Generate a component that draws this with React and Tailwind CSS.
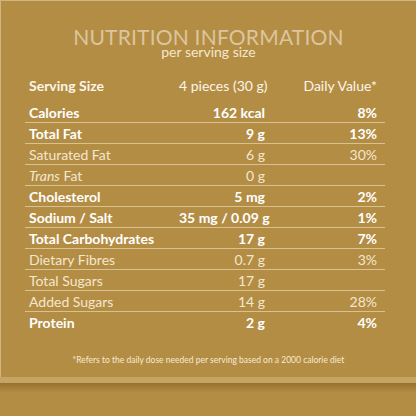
const rows = [
  { label: 'Calories', amount: '162 kcal', dv: '8%', bold: true },
  { label: 'Total Fat', amount: '9 g', dv: '13%', bold: true },
  { label: 'Saturated Fat', amount: '6 g', dv: '30%' },
  { label: 'Trans Fat', amount: '0 g', dv: '', italic: true },
  { label: 'Cholesterol', amount: '5 mg', dv: '2%', bold: true },
  { label: 'Sodium / Salt', amount: '35 mg / 0.09 g', dv: '1%', bold: true },
  { label: 'Total Carbohydrates', amount: '17 g', dv: '7%', bold: true },
  { label: 'Dietary Fibres', amount: '0.7 g', dv: '3%' },
  { label: 'Total Sugars', amount: '17 g', dv: '' },
  { label: 'Added Sugars', amount: '14 g', dv: '28%' },
  { label: 'Protein', amount: '2 g', dv: '4%', bold: true, last: true },
];

export default function App() {
  return (
    <div className="w-[416px] h-[416px] bg-[#b48d45] flex flex-col overflow-hidden" style={{ fontFamily: 'Lato, "Open Sans", sans-serif' }}>
      {/* Panel */}
      <div className="h-[377px] shrink-0 border-t border-l border-[#d2b57e] flex flex-col items-center">
        <h1 className="mt-[25px] text-[21px] leading-[21px] tracking-[0.2px] text-[#dcc59d]">
          NUTRITION INFORMATION
        </h1>
        <p className="mt-[-2px] text-[14px] leading-[14px] text-[#f4e7cd]">per serving size</p>

        <div className="self-start ml-[24px] w-[360px] mt-[12px] text-[14px] text-[#fbf5e8] whitespace-nowrap">
          <div className="flex items-center h-[31px] pb-[3px] pl-[4px] pr-[8px] font-bold">
            <span className="w-[150px]">Serving Size</span>
            <span className="w-[86px] text-right font-normal">4 pieces (30 g)</span>
            <span className="flex-1 text-right font-normal">Daily Value*</span>
          </div>
          {rows.map((r) => (
            <div
              key={r.label}
              className={`flex items-center h-[21px] pl-[4px] pr-[8px] ${r.last ? '' : 'border-b border-[#d8c292]'} ${r.bold ? 'font-bold text-white' : 'text-[#f3e7cd]'}`}
            >
              <span className="w-[150px]">
                {r.italic ? (
                  <>
                    <i>Trans</i> Fat
                  </>
                ) : (
                  r.label
                )}
              </span>
              <span className="w-[86px] text-right">{r.amount}</span>
              <span className="flex-1 text-right">{r.dv}</span>
            </div>
          ))}
        </div>

        <p className="mt-[21px] text-[8.5px] text-[#f6ead2]">
          *Refers to the daily dose needed per serving based on a 2000 calorie diet
        </p>
      </div>
      {/* Bottom lip */}
      <div className="h-[6px] shrink-0 bg-[#c6a463]" />
      <div className="h-[10px] shrink-0 bg-gradient-to-b from-[#95722f] to-[#b48d45]" />
    </div>
  );
}
